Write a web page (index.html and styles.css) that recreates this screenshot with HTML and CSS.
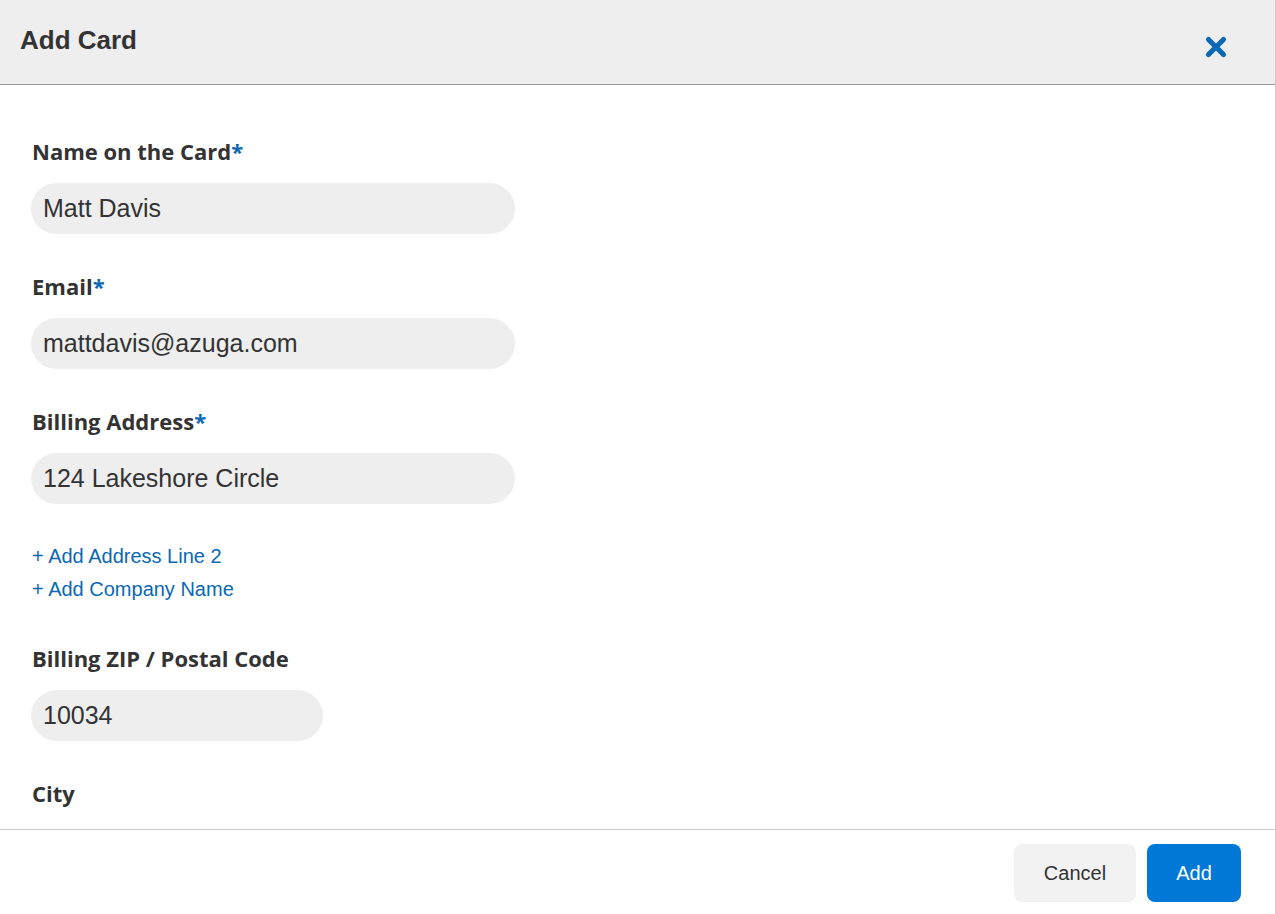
FILE: index.html
```html
<!DOCTYPE html>
<html lang="en">
<head>
    <meta charset="UTF-8">
    <meta name="viewport" content="width=device-width, initial-scale=1.0">
    <title>Add Card</title>
    <link rel="stylesheet" href="styles.css">
</head>
<body>
    <div class="modal">
        <div class="modal-header">
            <h1>Add Card</h1>
            <button type="button" class="close-btn" aria-label="Close">
                <svg width="24" height="24" viewBox="0 0 24 24"><path d="M4.5 4.5L19.5 19.5M19.5 4.5L4.5 19.5" stroke="#0a68b4" stroke-width="5.2" stroke-linecap="round"/></svg>
            </button>
        </div>
        <div class="modal-body">
            <div class="field">
                <label>Name on the Card<span class="req">*</span></label>
                <input type="text" class="text-input" value="Matt Davis">
            </div>
            <div class="field">
                <label>Email<span class="req">*</span></label>
                <input type="text" class="text-input" value="mattdavis@azuga.com">
            </div>
            <div class="field">
                <label>Billing Address<span class="req">*</span></label>
                <input type="text" class="text-input" value="124 Lakeshore Circle">
            </div>
            <div class="extra-links">
                <a href="#">+ Add Address Line 2</a>
                <a href="#">+ Add Company Name</a>
            </div>
            <div class="field">
                <label>Billing ZIP / Postal Code</label>
                <input type="text" class="text-input short" value="10034">
            </div>
            <div class="field">
                <label>City</label>
            </div>
        </div>
        <div class="modal-footer">
            <button type="button" class="btn btn-cancel">Cancel</button>
            <button type="button" class="btn btn-add">Add</button>
        </div>
    </div>
</body>
</html>
```

FILE: styles.css
```css
*{margin:0;padding:0;box-sizing:border-box;}
body{width:1276px;height:914px;overflow:hidden;background:#fff;font-family:"Liberation Sans", Arial, sans-serif;color:#333;}
.modal{height:914px;display:flex;flex-direction:column;border-right:1px solid #ccc;}
.modal-header{height:85px;flex-shrink:0;background:#eee;border-bottom:1px solid #999;display:flex;align-items:flex-start;justify-content:space-between;padding:24px 47px 0 20px;}
.modal-header h1{font-size:26px;font-weight:bold;line-height:32px;color:#333;}
.close-btn{border:none;background:none;cursor:pointer;margin-top:11px;display:flex;}
.modal-body{flex:1;overflow:hidden;padding:54px 32px 0 31px;}
.field{margin-bottom:40px;}
.field label{display:block;font-family:"Open Sans", sans-serif;font-weight:700;font-size:22px;line-height:24px;padding-left:1px;margin-bottom:20px;color:#333;}
.req{color:#0a68b4;}
.text-input{display:block;width:484px;height:51px;border:none;outline:none;border-radius:26px;background:#eee;padding:0 12px;font-family:"Liberation Sans", Arial, sans-serif;font-size:25px;color:#333;}
.text-input.short{width:292px;}
.extra-links{display:flex;flex-direction:column;gap:9px;margin:1px 0 45px 1px;}
.extra-links a{color:#0a68b4;text-decoration:none;font-size:20px;line-height:24px;}
.modal-footer{height:85px;flex-shrink:0;border-top:1px solid #ccc;display:flex;justify-content:flex-end;align-items:flex-start;gap:11px;padding:14px 34px 0 0;}
.btn{height:58px;border:none;border-radius:8px;font-family:"Liberation Sans", Arial, sans-serif;font-size:20px;cursor:pointer;}
.btn-cancel{width:122px;background:#f2f2f2;color:#333;}
.btn-add{width:94px;background:#0078d7;color:#fff;}
```
